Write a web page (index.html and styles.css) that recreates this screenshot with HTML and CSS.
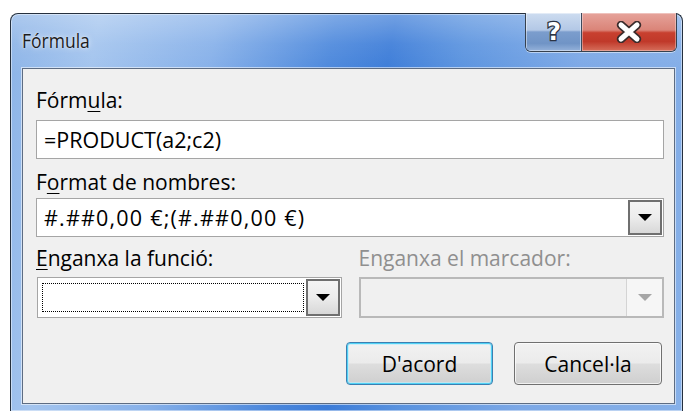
FILE: index.html
```html
<!DOCTYPE html>
<html lang="ca">
<head>
<meta charset="utf-8">
<title>Fórmula</title>
<link rel="stylesheet" href="styles.css">
</head>
<body>
<div class="desk">
  <div class="window">
    <div class="titlebar">
      <div class="title">Fórmula</div>
      <div class="caption-btns">
        <div class="cap help">
          <svg width="22" height="26" viewBox="0 0 22 26">
            <text x="11" y="21" text-anchor="middle" class="cap-glyph">?</text>
          </svg>
        </div>
        <div class="cap close">
          <svg width="28" height="22" viewBox="0 0 28 22">
            <path d="M6 4 L22 18 M22 4 L6 18" class="x-outline"/>
            <path d="M6 4 L22 18 M22 4 L6 18" class="x-fill"/>
          </svg>
        </div>
      </div>
    </div>

    <div class="client">
      <label class="lbl">Fórm<u>u</u>la:</label>
      <div class="field textbox">=PRODUCT(a2;c2)</div>

      <label class="lbl lbl-gap">F<u>o</u>rmat de nombres:</label>
      <div class="field combo">
        <span class="combo-text">#.##0,00 €;(#.##0,00 €)</span>
        <span class="drop"><span class="arrow"></span></span>
      </div>

      <div class="pair">
        <div class="col">
          <label class="lbl"><u>E</u>nganxa la funció:</label>
          <div class="field combo combo-tall">
            <span class="combo-text"><span class="focus-rect"></span></span>
            <span class="drop"><span class="arrow"></span></span>
          </div>
        </div>
        <div class="col">
          <label class="lbl lbl-off">Enganxa el marcador:</label>
          <div class="field combo combo-tall combo-off">
            <span class="combo-text"></span>
            <span class="drop"><span class="arrow"></span></span>
          </div>
        </div>
      </div>

      <div class="actions">
        <button class="btn btn-default">D'acord</button>
        <button class="btn">Cancel·la</button>
      </div>
    </div>
  </div>
</div>
</body>
</html>
```

FILE: styles.css
```css
html, body {
  margin: 0;
  padding: 0;
  background: #ffffff;
}

body {
  font-family: "Open Sans", "Noto Sans", "DejaVu Sans", sans-serif;
  color: #000;
  font-feature-settings: "locl" 0, "liga" 0;
  font-variant-ligatures: none;
}

.desk {
  width: 683px;
  height: 411px;
  overflow: hidden;
  padding: 13px 0 0 10px;
  box-sizing: border-box;
}

/* Aero glass frame */
.window {
  width: 673px;
  height: 398px;
  box-sizing: border-box;
  border: 1px solid #25303e;
  border-bottom: none;
  border-radius: 8px 8px 0 0;
  background:
    linear-gradient(180deg, rgba(255,255,255,0.28) 0px, rgba(255,255,255,0.08) 30px, rgba(255,255,255,0) 60px),
    linear-gradient(100deg, #8bb3e7 0%, #a3c4ee 12%, #86b0e9 28%, #4c88dc 44%, #3c7cd8 52%, #5a93df 62%, #7ca8e6 78%, #86b0e8 100%);
  box-shadow: inset 0 0 0 1px rgba(255,255,255,0.45);
  display: flex;
  flex-direction: column;
}

.titlebar {
  height: 54px;
  display: flex;
  justify-content: space-between;
  align-items: flex-start;
  padding-left: 11px;
  flex: none;
}

.title {
  margin-top: 14px;
  font-size: 17.5px;
  line-height: 24px;
  color: #1c1c1c;
  transform: scaleY(1.12);
  transform-origin: left center;
  text-shadow: 0 0 6px rgba(255,255,255,0.8), 0 0 2px rgba(255,255,255,0.7);
}

.caption-btns {
  display: flex;
  margin-top: -1px;
  margin-right: 5px;
  border: 1px solid #36414f;
  border-top: none;
  border-radius: 0 0 6px 6px;
  overflow: hidden;
  box-shadow: 0 1px 0 rgba(255,255,255,0.5);
}

.cap {
  height: 38px;
  display: flex;
  align-items: center;
  justify-content: center;
  box-sizing: border-box;
}

.help {
  width: 56px;
  border-right: 1px solid #3e4a5c;
  background: linear-gradient(180deg, #cddcf0 0%, #b3c8e6 45%, #7b9dcd 50%, #7094c6 80%, #95b2da 100%);
  box-shadow: inset 0 0 0 1px rgba(255,255,255,0.45);
}

.close {
  width: 94px;
  background: linear-gradient(180deg, #e6a39b 0%, #da8478 45%, #c8402f 52%, #c0392a 75%, #d66f5c 100%);
  box-shadow: inset 0 0 0 1px rgba(255,255,255,0.35);
}

.cap-glyph {
  font-family: "DejaVu Sans", sans-serif;
  font-weight: bold;
  font-size: 24px;
  fill: #ffffff;
  stroke: #2c3444;
  stroke-width: 2.6px;
  paint-order: stroke;
}

.x-outline {
  stroke: #3a2c2c;
  stroke-width: 8.5;
  stroke-linecap: round;
  fill: none;
}

.x-fill {
  stroke: #ffffff;
  stroke-width: 5;
  stroke-linecap: round;
  fill: none;
}

/* Dialog client area */
.client {
  flex: 1;
  margin: 0 7px 7px 11px;
  background: #f0f0f0;
  border: 1px solid #5d6c82;
  box-shadow: 0 0 0 1px rgba(255,255,255,0.55);
  padding: 19px 10px 0 13px;
  display: flex;
  flex-direction: column;
}

.lbl {
  display: block;
  font-size: 21px;
  line-height: 24px;
  height: 24px;
  margin-bottom: 8px;
}

.lbl u {
  text-decoration-thickness: 1px;
  text-underline-offset: 3px;
}

.lbl-gap {
  margin-top: 11px;
  margin-bottom: 4px;
}

.lbl-off {
  color: #8f8f8f;
}

.field {
  box-sizing: border-box;
  height: 39px;
  background: #ffffff;
  border: 1px solid #a5a5a5;
  font-size: 21.5px;
  display: flex;
  align-items: center;
}

.textbox {
  padding-left: 7px;
}

.combo {
  padding: 1px;
}

.combo-text {
  flex: 1;
  align-self: stretch;
  display: flex;
  align-items: center;
  padding-left: 6px;
  min-width: 0;
  letter-spacing: 1.2px;
}

.drop {
  width: 34px;
  align-self: stretch;
  box-sizing: border-box;
  border: 2px solid #6f6f6f;
  background: linear-gradient(180deg, #f4f4f4 0%, #ececec 50%, #d8d8d8 100%);
  display: flex;
  align-items: center;
  justify-content: center;
}

.arrow {
  width: 0;
  height: 0;
  border-left: 7px solid transparent;
  border-right: 7px solid transparent;
  border-top: 7px solid #000;
}

.pair {
  display: flex;
  gap: 17px;
  margin-top: 9px;
}

.pair .col {
  flex: 1;
  display: flex;
  flex-direction: column;
}

.pair .lbl {
  margin-bottom: 7px;
}

.combo-tall {
  height: 41px;
}

.pair .col:first-child .combo-tall {
  margin-left: 1px;
}

.focus-rect {
  flex: 1;
  align-self: stretch;
  margin: 4px 2px 4px -3px;
  border: 1px dotted #000;
}

.combo-off {
  background: #f0f0f0;
  border: 2px solid #b9b9b9;
  padding: 0;
}

.combo-off .drop {
  border: none;
  border-left: 1px solid #d4d4d4;
  background: #f6f6f6;
  width: 36px;
}

.combo-off .arrow {
  border-top-color: #a6a6a6;
}

.actions {
  display: flex;
  justify-content: flex-end;
  gap: 21px;
  margin-top: 24px;
  margin-right: 2px;
}

.btn {
  width: 148px;
  height: 43px;
  box-sizing: border-box;
  font-family: inherit;
  font-feature-settings: "locl" 0, "liga" 0;
  font-size: 21px;
  color: #000;
  border: 1px solid #707070;
  border-radius: 4px;
  background: linear-gradient(180deg, #f2f2f2 0%, #ebebeb 48%, #dddddd 52%, #cfcfcf 100%);
  box-shadow: inset 0 0 0 1px rgba(255,255,255,0.7);
  padding: 0;
}

.btn-default {
  width: 147px;
  border-color: #3c7fb1;
  box-shadow: inset 0 0 0 1px #4fd1f5, inset 0 0 0 2px rgba(190,235,250,0.7);
}
```
